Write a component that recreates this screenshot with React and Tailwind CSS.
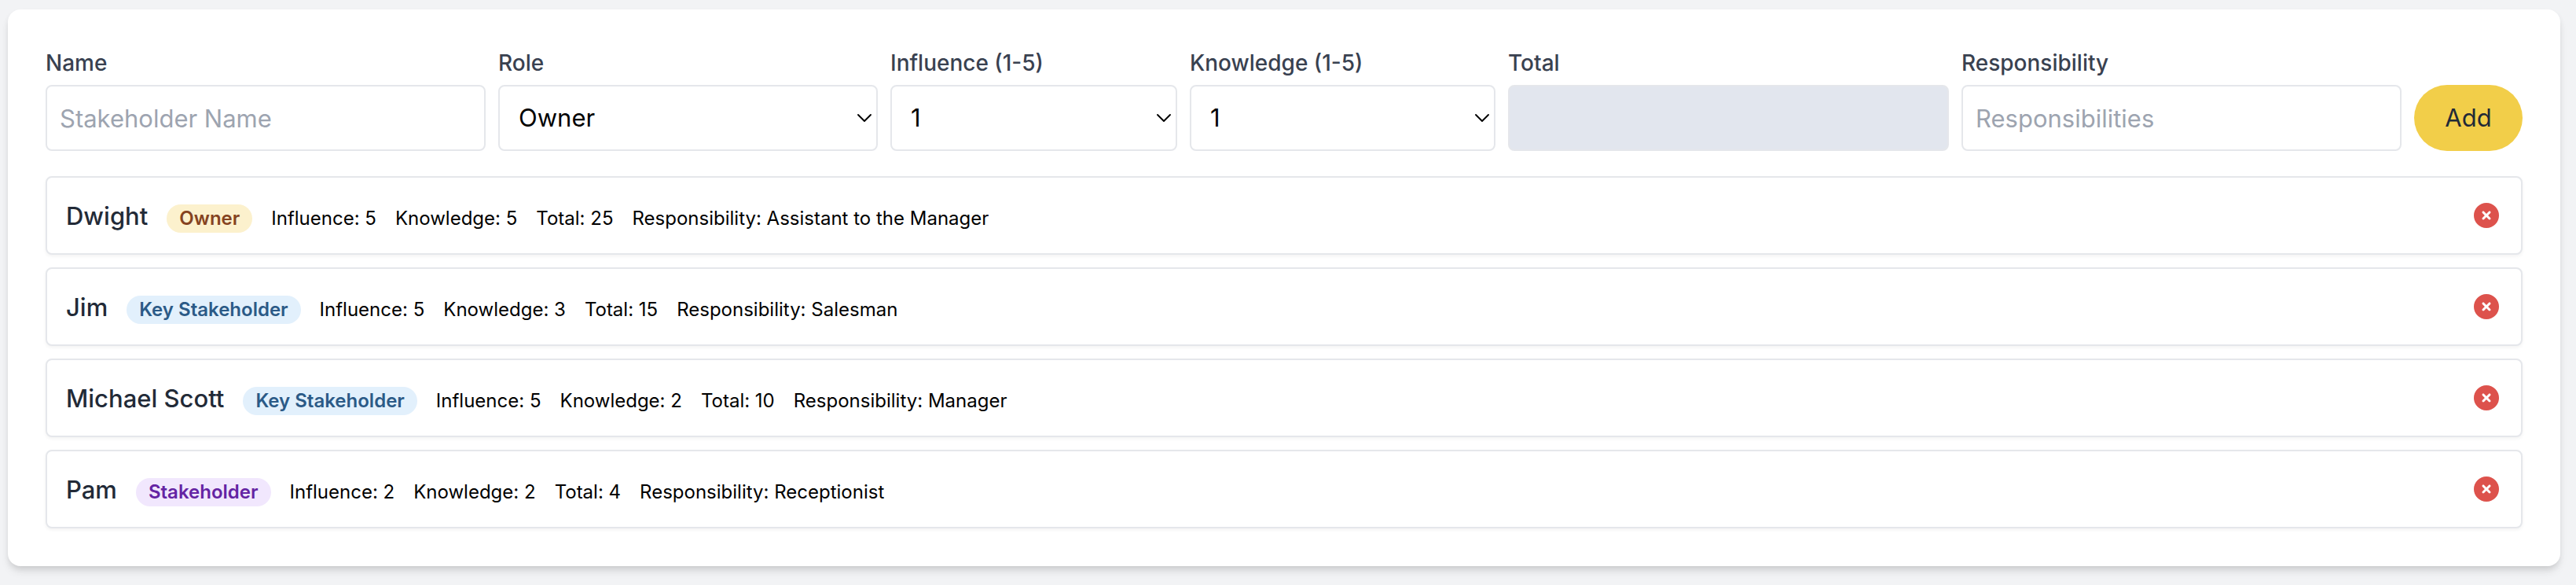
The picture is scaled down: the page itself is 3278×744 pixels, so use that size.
import { useState } from "react";
import { FaCircleXmark } from "react-icons/fa6";

const initialStakeholders = [
  { name: "Dwight", role: "Owner", influence: 5, knowledge: 5, responsibility: "Assistant to the Manager" },
  { name: "Jim", role: "Key Stakeholder", influence: 5, knowledge: 3, responsibility: "Salesman" },
  { name: "Michael Scott", role: "Key Stakeholder", influence: 5, knowledge: 2, responsibility: "Manager" },
  { name: "Pam", role: "Stakeholder", influence: 2, knowledge: 2, responsibility: "Receptionist" },
];

const badgeColors = {
  Owner: "bg-[#fcf1cd] text-[#854321]",
  "Key Stakeholder": "bg-[#e2f0fc] text-[#2b5a87]",
  Stakeholder: "bg-[#f1e7fd] text-[#6424a3]",
};

const roles = ["Owner", "Key Stakeholder", "Stakeholder"];
const scores = ["1", "2", "3", "4", "5"];

const control = "h-[84px] w-full rounded-lg border-2 border-gray-200 text-[31px] leading-[48px]";

function Field({ id, label, children }) {
  return (
    <div className="min-w-0">
      <label htmlFor={id} className="mb-2 block text-[28px] leading-10 font-medium text-[#394150]">
        {label}
      </label>
      {children}
    </div>
  );
}

function TextField({ id, label, placeholder, value, onChange }) {
  return (
    <Field id={id} label={label}>
      <input
        id={id}
        type="text"
        placeholder={placeholder}
        value={value}
        onChange={(e) => onChange(e.target.value)}
        className={`${control} bg-white px-4 placeholder:text-[#9da4b0]`}
      />
    </Field>
  );
}

function SelectField({ id, label, options, value, onChange }) {
  return (
    <Field id={id} label={label}>
      <div className="relative">
        <select
          id={id}
          value={value}
          onChange={(e) => onChange(e.target.value)}
          className={`${control} appearance-none bg-white pr-10 pl-6`}
        >
          {options.map((option) => (
            <option key={option}>{option}</option>
          ))}
        </select>
        <svg
          viewBox="0 0 20 12"
          className="pointer-events-none absolute top-9 right-[7px] h-3 w-5 text-black"
          fill="none"
          stroke="currentColor"
          strokeWidth="1.9"
          strokeLinecap="round"
          strokeLinejoin="round"
          aria-hidden="true"
        >
          <path d="M2 2l8 8 8-8" />
        </svg>
      </div>
    </Field>
  );
}

export default function App() {
  const [stakeholders, setStakeholders] = useState(initialStakeholders);
  const [name, setName] = useState("");
  const [role, setRole] = useState("Owner");
  const [influence, setInfluence] = useState("1");
  const [knowledge, setKnowledge] = useState("1");
  const [responsibility, setResponsibility] = useState("");

  function add(e) {
    e.preventDefault();
    if (!name) return;
    setStakeholders([
      ...stakeholders,
      { name, role, influence: Number(influence), knowledge: Number(knowledge), responsibility },
    ]);
    setName("");
    setResponsibility("");
  }

  return (
    <div className="min-h-screen bg-[#f2f3f5] pt-3 pr-5 pb-6 pl-[10px] font-['Inter',sans-serif] text-black">
      <main className="rounded-2xl bg-white p-12 shadow-[0_8px_12px_-2px_rgba(0,0,0,0.1),0_4px_8px_-2px_rgba(0,0,0,0.1)]">
        <form
          onSubmit={add}
          className="grid grid-cols-[560fr_483fr_365fr_389fr_561fr_560fr_138px] items-end gap-4"
        >
          <TextField id="name" label="Name" placeholder="Stakeholder Name" value={name} onChange={setName} />
          <SelectField id="role" label="Role" options={roles} value={role} onChange={setRole} />
          <SelectField id="influence" label="Influence (1-5)" options={scores} value={influence} onChange={setInfluence} />
          <SelectField id="knowledge" label="Knowledge (1-5)" options={scores} value={knowledge} onChange={setKnowledge} />
          <Field id="total" label="Total">
            <input id="total" type="text" readOnly className={`${control} bg-[#e2e6ee] px-4`} />
          </Field>
          <TextField
            id="responsibility"
            label="Responsibility"
            placeholder="Responsibilities"
            value={responsibility}
            onChange={setResponsibility}
          />
          <button
            type="submit"
            className="h-[84px] rounded-full bg-[#f2ce49] text-[31px] leading-[48px] text-[#222a37]"
          >
            Add
          </button>
        </form>

        <ul className="mt-8 flex flex-col gap-4">
          {stakeholders.map((person, index) => (
            <li
              key={index}
              className="flex items-center justify-between rounded-lg border-2 border-gray-200 bg-white px-6 py-[23px] shadow-[0_2px_4px_rgba(0,0,0,0.05)]"
            >
              <div className="flex items-baseline gap-6 pt-[2px] text-[24px] leading-8">
                <span className="text-[31px] leading-[48px] font-medium text-[#222a37]">{person.name}</span>
                <span className={`rounded-full px-4 py-[2px] font-semibold ${badgeColors[person.role]}`}>
                  {person.role}
                </span>
                <span>Influence: {person.influence}</span>
                <span>Knowledge: {person.knowledge}</span>
                <span>Total: {person.influence * person.knowledge}</span>
                <span>Responsibility: {person.responsibility}</span>
              </div>
              <button
                type="button"
                aria-label={`Remove ${person.name}`}
                onClick={() => setStakeholders(stakeholders.filter((_, i) => i !== index))}
                className="mr-1 text-[#dd524c]"
              >
                <FaCircleXmark className="size-8" />
              </button>
            </li>
          ))}
        </ul>
      </main>
    </div>
  );
}
